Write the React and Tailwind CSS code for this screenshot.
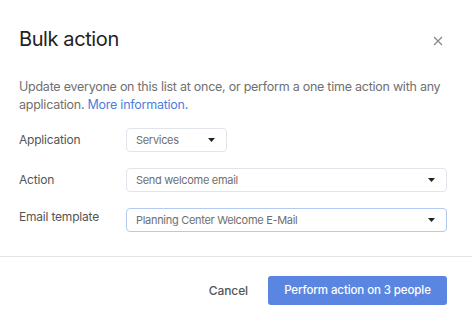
import React from "react";

function Caret() {
  return (
    <svg width="7" height="4" viewBox="0 0 7 4" className="shrink-0">
      <path d="M0 0 L7 0 L3.5 4 Z" fill="#222" />
    </svg>
  );
}

function Select({ value, className = "", focused = false }) {
  return (
    <div
      className={
        "h-[24px] flex items-center justify-between pl-[9px] pr-[11px] rounded-[4px] border bg-white " +
        (focused ? "border-[#b3c9f3] " : "border-[#e1e4ea] ") +
        className
      }
    >
      <span className="text-[11px] tracking-[-0.3px] text-[#6f6f6f] leading-none">{value}</span>
      <Caret />
    </div>
  );
}

export default function App() {
  return (
    <div
      className="w-[472px] h-[321px] bg-white relative overflow-hidden"
      style={{ fontFamily: "Inter, 'Noto Sans', sans-serif" }}
    >
      <div className="px-[19px]">
        <div className="flex justify-between pt-[25px] h-[78px] items-start">
          <h1 className="text-[20px] leading-[28px] text-[#222] font-normal tracking-[-0.4px]">
            Bulk action
          </h1>
          <svg width="10" height="10" viewBox="0 0 10 10" className="mt-[11px] mr-[10px]">
            <path d="M1 1 L9 9 M9 1 L1 9" stroke="#8a8a8a" strokeWidth="1.3" />
          </svg>
        </div>
        <p className="text-[12.5px] leading-[18px] tracking-[-0.25px] text-[#707070] pr-[6px]">
          Update everyone on this list at once, or perform a one time action with any application.{" "}
          <span className="text-[#4b7fe0]">More information.</span>
        </p>
        <div className="mt-[14px] flex flex-col gap-[16px] pr-[6px]">
          <div className="flex items-center">
            <div className="w-[107px] text-[12px] tracking-[-0.2px] text-[#555]">Application</div>
            <Select value="Services" className="w-[101px]" />
          </div>
          <div className="flex items-center">
            <div className="w-[107px] text-[12px] tracking-[-0.2px] text-[#555]">Action</div>
            <Select value="Send welcome email" className="flex-1" />
          </div>
          <div className="flex items-center">
            <div className="w-[107px] text-[12px] tracking-[-0.2px] text-[#555] -mt-[6px]">Email template</div>
            <Select value="Planning Center Welcome E-Mail" className="flex-1" focused />
          </div>
        </div>
      </div>
      <div className="mt-[24px] border-t border-[#e3e3e3]" />
      <div className="flex items-center justify-end pr-[25px] pt-[19px] gap-[20px]">
        <span className="text-[12px] font-medium tracking-[-0.1px] text-[#555]">Cancel</span>
        <button className="h-[29px] w-[179px] rounded-[3px] bg-[#5a86e2] text-white text-[11.5px] tracking-[-0.1px] font-medium">
          Perform action on 3 people
        </button>
      </div>
    </div>
  );
}
